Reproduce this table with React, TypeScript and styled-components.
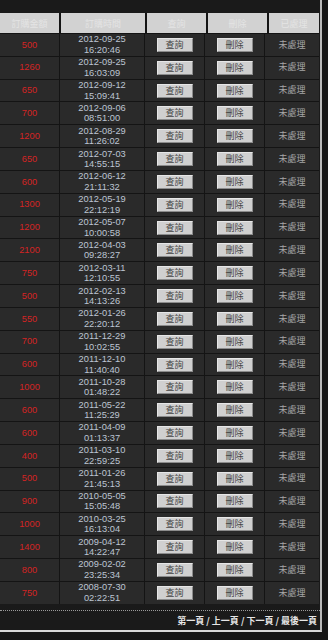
import React from "react";
import styled, { createGlobalStyle } from "styled-components";

const GlobalStyle = createGlobalStyle`
  html, body {
    margin: 0;
    padding: 0;
    background: #161616;
  }
  body {
    width: 328px;
    height: 640px;
    overflow: hidden;
    font-family: "Liberation Sans", "Noto Sans CJK TC", Arial, sans-serif;
  }
`;

const Frame = styled.div`
  width: 320px;
  padding-top: 13px;
  background: #1a1a1a;
  border-right: 2px solid #b9b9b9;
  border-bottom: 2px solid #d8d8d8;
`;

const Table = styled.div`
  display: flex;
  flex-direction: column;
  gap: 1px;
  width: 319px;
  background: #141414;
`;

const Row = styled.div<{ $head?: boolean }>`
  display: grid;
  grid-template-columns: 59px 84px 59px 59px 1fr;
  column-gap: ${(p) => (p.$head ? "2px" : "1px")};
  height: ${(p) => (p.$head ? "20px" : "21.84px")};
  background: #141414;
`;

const HeadCell = styled.div`
  display: flex;
  align-items: center;
  justify-content: center;
  background: #d2d2d2;
  color: #e4e4e4;
  font-family: "Noto Sans CJK TC", sans-serif;
  font-size: 9px;
`;

const Cell = styled.div<{ $tone?: "red" | "date" | "gray" }>`
  display: flex;
  flex-direction: column;
  align-items: center;
  justify-content: center;
  background: #2a2a2a;
  font-size: ${(p) => (p.$tone === "gray" ? "9px" : "9.3px")};
  line-height: 10.5px;
  color: ${(p) =>
    p.$tone === "red" ? "#d42424" : p.$tone === "gray" ? "#a6a6a6" : "#bdc5d3"};
`;

const Btn = styled.button`
  width: 36px;
  height: 14px;
  padding: 0;
  margin: 0;
  background: #d0d0d0;
  border: 1px solid #8c8c8c;
  border-top-color: #e6e6e6;
  border-left-color: #e6e6e6;
  color: #444;
  font-family: "Noto Sans CJK TC", sans-serif;
  font-size: 9px;
  line-height: 12px;
`;

const Footer = styled.div`
  margin-top: 6px;
  border-top: 1px dotted #9a9a9a;
  height: 19px;
  display: flex;
  align-items: center;
  justify-content: flex-end;
  padding-right: 3px;
  color: #e6e6e6;
  font-family: "Noto Sans CJK TC", sans-serif;
  font-size: 9px;
  font-weight: bold;
  white-space: pre;
`;

const orders: [number, string, string][] = [
  [500, "2012-09-25", "16:20:46"],
  [1260, "2012-09-25", "16:03:09"],
  [650, "2012-09-12", "15:09:41"],
  [700, "2012-09-06", "08:51:00"],
  [1200, "2012-08-29", "11:26:02"],
  [650, "2012-07-03", "14:55:15"],
  [600, "2012-06-12", "21:11:32"],
  [1300, "2012-05-19", "22:12:19"],
  [1200, "2012-05-07", "10:00:58"],
  [2100, "2012-04-03", "09:28:27"],
  [750, "2012-03-11", "12:10:55"],
  [500, "2012-02-13", "14:13:26"],
  [550, "2012-01-26", "22:20:12"],
  [700, "2011-12-29", "10:02:55"],
  [600, "2011-12-10", "11:40:40"],
  [1000, "2011-10-28", "01:48:22"],
  [600, "2011-05-22", "11:25:29"],
  [600, "2011-04-09", "01:13:37"],
  [400, "2011-03-10", "22:59:25"],
  [500, "2011-01-26", "21:45:13"],
  [900, "2010-05-05", "15:05:48"],
  [1000, "2010-03-25", "16:13:04"],
  [1400, "2009-04-12", "14:22:47"],
  [800, "2009-02-02", "23:25:34"],
  [750, "2008-07-30", "02:22:51"],
];

const App: React.FC = () => {
  return (
    <>
      <GlobalStyle />
      <Frame>
        <Table>
          <Row $head>
            <HeadCell>訂購金額</HeadCell>
            <HeadCell>訂購時間</HeadCell>
            <HeadCell>查詢</HeadCell>
            <HeadCell>刪除</HeadCell>
            <HeadCell>已處理</HeadCell>
          </Row>
          {orders.map(([amount, date, time], i) => (
            <Row key={i}>
              <Cell $tone='red'>{amount}</Cell>
              <Cell $tone='date'>
                <span>{date}</span>
                <span>{time}</span>
              </Cell>
              <Cell>
                <Btn>查詢</Btn>
              </Cell>
              <Cell>
                <Btn>刪除</Btn>
              </Cell>
              <Cell $tone='gray'>未處理</Cell>
            </Row>
          ))}
        </Table>
        <Footer>第一頁 / 上一頁 / 下一頁 / 最後一頁</Footer>
      </Frame>
    </>
  );
};

export default App;
